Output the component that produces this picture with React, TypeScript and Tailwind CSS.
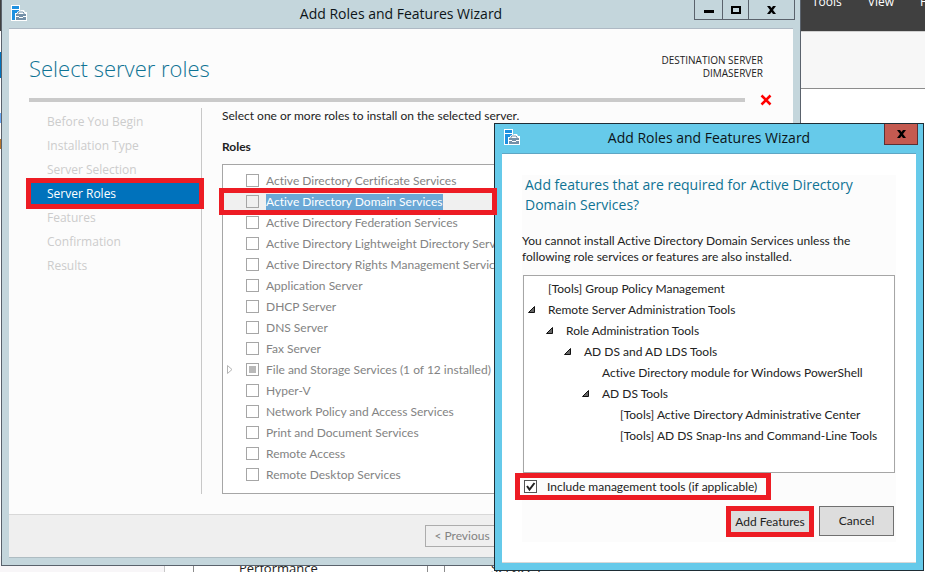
import type { ReactNode } from 'react';
import { clsx } from 'clsx';

interface Role {
    name: string;
    selected?: boolean;
    partial?: boolean;
}

interface Feature {
    name: string;
    level: number;
    expanded?: boolean;
}

const steps = [
    'Before You Begin',
    'Installation Type',
    'Server Selection',
    'Server Roles',
    'Features',
    'Confirmation',
    'Results',
];

const roles: Role[] = [
    { name: 'Active Directory Certificate Services' },
    { name: 'Active Directory Domain Services', selected: true },
    { name: 'Active Directory Federation Services' },
    { name: 'Active Directory Lightweight Directory Services' },
    { name: 'Active Directory Rights Management Services' },
    { name: 'Application Server' },
    { name: 'DHCP Server' },
    { name: 'DNS Server' },
    { name: 'Fax Server' },
    { name: 'File and Storage Services (1 of 12 installed)', partial: true },
    { name: 'Hyper-V' },
    { name: 'Network Policy and Access Services' },
    { name: 'Print and Document Services' },
    { name: 'Remote Access' },
    { name: 'Remote Desktop Services' },
];

const features: Feature[] = [
    { name: '[Tools] Group Policy Management', level: 0 },
    { name: 'Remote Server Administration Tools', level: 0, expanded: true },
    { name: 'Role Administration Tools', level: 1, expanded: true },
    { name: 'AD DS and AD LDS Tools', level: 2, expanded: true },
    { name: 'Active Directory module for Windows PowerShell', level: 3 },
    { name: 'AD DS Tools', level: 3, expanded: true },
    { name: '[Tools] Active Directory Administrative Center', level: 4 },
    { name: '[Tools] AD DS Snap-Ins and Command-Line Tools', level: 4 },
];

function WizardIcon() {
    return (
        <svg width="16" height="16" viewBox="0 0 16 16" aria-hidden="true">
            <path d="M0 0h9v6l1-1h3l1 2h2v9H0z" fill="#fff" />
            <path d="M1 1h7v3H1zM1 5h7v1L6 7v1H4v7H1z" fill="#1e90e0" />
            <path d="M5 9h10v6H5z" fill="#7590a8" />
            <path d="M7 9V8l1-1h4l1 1v1" fill="none" stroke="#7590a8" />
            <path d="M5 11.500h3M12 11.500h3M8 12.500h4" stroke="#fff" fill="none" />
        </svg>
    );
}

function CloseGlyph() {
    return (
        <svg width="9" height="8" viewBox="0 0 9 8" aria-hidden="true">
            <path d="M0 0h3l1.500 2L6 0h3L6 4l3 4H6L4.500 6 3 8H0l3-4z" fill="#000" />
        </svg>
    );
}

function TitleBar({ children }: { children: ReactNode }) {
    return (
        <header className="grid grid-cols-[1fr_auto_1fr] items-start">
            <div className="pt-[5px] pl-[2px]">
                <WizardIcon />
            </div>
            <h1 className="pt-1 font-['Open_Sans'] text-sm leading-5 text-[#0c1418]">Add Roles and Features Wizard</h1>
            {children}
        </header>
    );
}

function ServerManager() {
    return (
        <div className="flex h-screen flex-col bg-white font-['Open_Sans']">
            <nav className="flex h-[31px] shrink-0 justify-end gap-[26px] bg-[#404040] text-xs leading-4 text-white">
                <a href="#tools" className="-mt-[6px]">Tools</a>
                <a href="#view" className="-mt-[6px]">View</a>
                <a href="#help" className="-mt-[6px] w-[5px]">Help</a>
            </nav>
            <div className="flex grow">
                <aside className="w-px shrink-0 pt-[21px]">
                    <div className="h-[26px] bg-[#0072bc]" />
                    <div className="mt-[35px] h-[10px] bg-[#6aa9f5]" />
                    <div className="mt-4 h-[10px] bg-[#b8752a]" />
                </aside>
                <div className="grow">
                    <div className="h-[58px] border-t border-b border-t-[#d0d0d0] border-b-[#8c8c8c] bg-[#f7f7f7]" />
                </div>
            </div>
            <div className="flex h-4 shrink-0 bg-white text-[13px] leading-6 text-[#222]">
                <div className="w-[165px] shrink-0 border-r border-[#c8c8c8] bg-[#f8f6f8]" />
                <div className="ml-7 w-[235px] shrink-0 border-x border-[#8c8c8c] pl-[45px]">Performance</div>
                <div className="ml-4 flex-1 border-l border-[#8c8c8c] pl-[46px]">Services</div>
            </div>
        </div>
    );
}

function RoleRow({ role }: { role: Role }) {
    return (
        <li className={clsx('flex h-[21px] items-center pl-1', role.selected && 'bg-[#f0f0f0]')}>
            <span className="w-[19px] shrink-0">
                {role.partial && (
                    <svg width="6" height="9" viewBox="0 0 6 9" aria-hidden="true">
                        <path d="M.5.5v8l4.500-4z" fill="none" stroke="#b4b4b4" />
                    </svg>
                )}
            </span>
            <label
                className={clsx(
                    'flex grow items-center gap-[7px] whitespace-nowrap',
                    role.selected ? 'text-white' : 'text-[#838383]',
                )}
            >
                <input
                    type="checkbox"
                    disabled
                    className={clsx(
                        'grid size-[13px] shrink-0 appearance-none place-items-center border border-[#a6a6a6]',
                        role.partial && "before:size-[7px] before:bg-[#b8b8b8] before:content-['']",
                    )}
                />
                <span className={clsx('leading-4', role.selected && 'bg-[#6ba8d6]')}>{role.name}</span>
            </label>
        </li>
    );
}

function WizardWindow() {
    return (
        <section className="absolute top-0 right-[124px] left-px border border-t-0 border-[#5a626c] bg-[#c4d6dc] px-[7px] pb-[7px]">
            <TitleBar>
                <div className="-mr-[2px] flex h-5 justify-self-end border border-t-0 border-[#5a626c]">
                    <button type="button" aria-label="Minimize" className="flex w-[27px] items-center justify-center">
                        <span className="mt-1 h-[3px] w-[10px] bg-black" />
                    </button>
                    <button type="button" aria-label="Maximize" className="flex w-[27px] items-center justify-center border-x border-[#5a626c]">
                        <span className="h-2 w-[10px] border-2 border-black" />
                    </button>
                    <button type="button" aria-label="Close" className="flex w-[45px] items-center justify-center">
                        <CloseGlyph />
                    </button>
                </div>
            </TitleBar>

            <div className="mt-1 border-t border-b border-t-[#aeb9c4] border-b-[#aebcc2] bg-[#fcfcfc]">
                <div className="flex justify-between pt-[23px] pr-[30px] pl-5 font-['Open_Sans']">
                    <h2 className="text-[22px] leading-8 font-light text-[#0f7394]">Select server roles</h2>
                    <div className="pt-[2px] text-right text-[10px] leading-[13px] text-[#222]">
                        <p>DESTINATION SERVER</p>
                        <p>DIMASERVER</p>
                    </div>
                </div>
                <div className="mt-[10px] flex items-center gap-[15px] pr-[21px] pl-5">
                    <div className="h-1 grow bg-[#cacaca]" />
                    <svg width="12" height="12" viewBox="0 0 12 12" aria-label="Close wizard">
                        <path d="M1.500 1.500l9 9M10.500 1.500l-9 9" stroke="#ff0000" strokeWidth="2.500" />
                    </svg>
                </div>

                <div className="mt-[2px] flex pr-5 pb-5 pl-[22px] text-xs">
                    <nav className="w-[171px] shrink-0 border-r border-[#c8c8c8] pt-px pr-[2px] font-['Open_Sans']">
                        <ul>
                            {steps.map((step) => (
                                <li key={step} className="flex h-6 items-center">
                                    <a
                                        href="#step"
                                        className={clsx(
                                            'z-10 h-[21px] grow pl-4 leading-[22px]',
                                            step === 'Server Roles'
                                                ? 'bg-[#0072bc] text-white outline-5 outline-[#ed1c24]'
                                                : 'text-[#cccccc]',
                                        )}
                                    >
                                        {step}
                                    </a>
                                </li>
                            ))}
                        </ul>
                    </nav>
                    <div className="min-w-0 grow pl-5">
                        <p className="leading-4 text-[#222]">Select one or more roles to install on the selected server.</p>
                        <h3 className="mt-[15px] leading-4 font-bold text-[#222]">Roles</h3>
                        <ul className="mt-[9px] overflow-hidden border border-[#a6a6a6] bg-white pt-[5px] pb-2">
                            {roles.map((role) => (
                                <RoleRow key={role.name} role={role} />
                            ))}
                        </ul>
                    </div>
                </div>

                <footer className="border-t border-[#d8d8d8] bg-[#efefef] pt-[10px] pb-[10px] pl-[416px]">
                    <button type="button" disabled className="block h-[22px] w-[74px] border border-[#acacac] text-xs text-[#838383]">
                        &lt; Previous
                    </button>
                </footer>
            </div>
        </section>
    );
}

function FeaturesDialog() {
    return (
        <section
            role="dialog"
            aria-label="Add Roles and Features Wizard"
            className="absolute top-[123px] right-px left-[494px] border border-[#1e2d35] bg-[#66caea] px-[7px] pb-[7px]"
        >
            <TitleBar>
                <button
                    type="button"
                    aria-label="Close"
                    className="-mr-[2px] flex h-[21px] w-[34px] items-center justify-center justify-self-end border border-t-0 border-[#5c3034] bg-[#c45a50]"
                >
                    <CloseGlyph />
                </button>
            </TitleBar>

            <div className="mt-[5px] border-t border-b border-t-[#5fa6c4] border-b-[#d8d8d8] bg-white px-5 pt-[21px] pb-5 text-xs text-[#222]">
                <div className="bg-[#fcfcfc]">
                    <h2 className="pl-[3px] font-['Open_Sans'] text-sm leading-5 text-[#0f7394]">
                        Add features that are required for Active Directory
                        <br />
                        Domain Services?
                    </h2>
                    <p className="mt-[18px] leading-4">
                        You cannot install Active Directory Domain Services unless the
                        <br />
                        following role services or features are also installed.
                    </p>
                    <ul className="mx-px mt-[10px] h-[198px] border border-[#a6a6a6] bg-white pt-[2px] pl-1">
                        {features.map((feature) => (
                            <li
                                key={feature.name}
                                className="flex h-[21px] items-center whitespace-nowrap"
                                style={{ paddingLeft: feature.level * 18 }}
                            >
                                <span className="w-5 shrink-0">
                                    {feature.expanded && (
                                        <svg width="7" height="7" viewBox="0 0 7 7" aria-hidden="true">
                                            <path d="M6.500.5v6h-6z" fill="#666" stroke="#111" />
                                        </svg>
                                    )}
                                </span>
                                {feature.name}
                            </li>
                        ))}
                    </ul>
                    <label className="-ml-[7px] flex h-[27px] w-[256px] items-center gap-[10px] border-5 border-[#ed1c24] pl-1 whitespace-nowrap">
                        <span className="grid shrink-0">
                            <input
                                type="checkbox"
                                defaultChecked
                                className="col-start-1 row-start-1 size-[13px] appearance-none border border-[#555] bg-white"
                            />
                            <svg className="pointer-events-none col-start-1 row-start-1" width="13" height="13" viewBox="0 0 13 13" aria-hidden="true">
                                <path d="M3 6l2.500 3.500L10.500 3" fill="none" stroke="#222" strokeWidth="2" />
                            </svg>
                        </span>
                        Include management tools (if applicable)
                    </label>
                    <div className="mt-[6px] flex justify-end gap-[5px] pr-[2px] pb-[5px]">
                        <button type="button" className="h-[31px] w-[88px] border-5 border-[#ed1c24] bg-[#dddddd] whitespace-nowrap">
                            Add Features
                        </button>
                        <button type="button" className="h-[30px] w-[75px] border border-[#707070] bg-[#dddddd]">
                            Cancel
                        </button>
                    </div>
                </div>
            </div>
        </section>
    );
}

export default function App() {
    return (
        <main className="relative h-screen overflow-hidden font-['Lato','Open_Sans',sans-serif] [font-variant-ligatures:none]">
            <ServerManager />
            <WizardWindow />
            <FeaturesDialog />
            {/* Callout round the Domain Services role, drawn above both windows */}
            <div className="pointer-events-none absolute top-[188px] left-[219px] h-[27px] w-[278px] border-5 border-[#ed1c24]" />
        </main>
    );
}
